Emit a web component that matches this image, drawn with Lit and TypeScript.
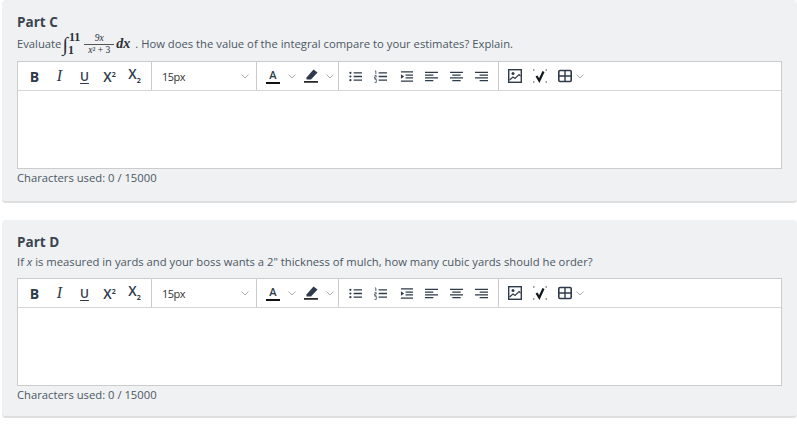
import { LitElement, html, css, svg } from "lit";
import { customElement } from "lit/decorators.js";

const ic = (w: number, body: unknown) => html`<svg width=${w} height="14" viewBox="0 0 ${w} 14" fill="none">${body}</svg>`;
const chev = html`<svg class="chev" width="8" height="5" viewBox="0 0 8 5" fill="none"><path d="M.5.5L4 4 7.500.5" stroke="#a9adb3" stroke-width="1"/></svg>`;
const D = "#2f3a4a";

const listLines = svg`<path d="M5 3h9M5 7h9M5 11h9" stroke=${D} stroke-width="1.4"/>`;
const icons = {
  bullets: ic(14, svg`${listLines}<circle cx="1.500" cy="3" r="1.200" fill=${D}/><circle cx="1.500" cy="7" r="1.200" fill=${D}/><circle cx="1.500" cy="11" r="1.200" fill=${D}/>`),
  numbers: ic(14, svg`${listLines}<path d="M1 1h1v3.500M.6 6h1.800v1.500H.6V9h1.900M.6 10h1.900v3.300H.6" stroke=${D} stroke-width=".8"/>`),
  indent: ic(14, svg`<path d="M1 2h13M6 5.500h8M6 8.500h8M1 12h13" stroke=${D} stroke-width="1.400"/><path d="M1 4.500l3.500 2.500L1 9.500z" fill=${D}/>`),
  left: ic(14, svg`<path d="M0 2.500h14M0 5.500h9M0 8.500h14M0 11.500h9" stroke=${D} stroke-width="1.400"/>`),
  center: ic(14, svg`<path d="M0 2.500h14M2.500 5.500h9M0 8.500h14M2.500 11.500h9" stroke=${D} stroke-width="1.400"/>`),
  right: ic(14, svg`<path d="M0 2.500h14M5 5.500h9M0 8.500h14M5 11.500h9" stroke=${D} stroke-width="1.400"/>`),
  image: ic(14, svg`<rect x=".7" y=".7" width="12.600" height="12.600" stroke=${D} stroke-width="1.400"/><circle cx="5" cy="4.500" r="1.500" fill=${D}/><path d="M1.500 11l3.500-3 2 1.500 4-4 1.500 1.500" stroke=${D} stroke-width="1.200"/>`),
  check: ic(16, svg`<path d="M4.500 7l2.800 4.500L11.500 2.500" stroke="#15191f" stroke-width="2.300"/><path d="M1 1h1.500M13.500 1H15M1 13h1.500M13.500 13H15" stroke="#444" stroke-width="1.200"/>`),
  table: ic(14, svg`<rect x=".8" y="1.500" width="12.400" height="11" rx="1.200" stroke=${D} stroke-width="1.600"/><path d="M1 7h12M7 2v10" stroke=${D} stroke-width="1.400"/>`),
  pen: ic(14, svg`<path d="M2.500 8.500L9.500 0.500l4 3L7 10.500H2.500z" fill=${D}/><path d="M0 12.900h14" stroke="#111" stroke-width="1.600"/>`),
};

@customElement("rich-editor")
export class RichEditor extends LitElement {
  static styles = css`
    :host { display: block; }
    .editor { border: 1px solid #ccc; background: #fff; }
    .bar { height: 28px; display: flex; align-items: stretch; border-bottom: 1px solid #d6d6d6; }
    .group { display: flex; align-items: center; border-right: 1px solid #ccc; box-sizing: border-box; }
    .fmt { width: 134px; padding-left: 4px; }
    .fmt span { width: 25px; display: block; text-align: center; color: #2f3a4a; }
    .b { font: 700 14px "Open Sans", sans-serif; }
    .i { font: italic 400 16px "Liberation Serif", serif; }
    .u { font: 600 12px "Open Sans", sans-serif; text-decoration: underline; text-underline-offset: 2px; }
    .x { font: 600 13.500px "Open Sans", sans-serif; position: relative; }
    .x sup, .x sub { font-size: 7px; line-height: 0; font-weight: 700; }
    .fmt .x { top: 1px; }
    .fmt .x.up { top: -2px; }
    .size { width: 105px; padding: 0 7px 0 10px; justify-content: space-between; font: 400 11px "Open Sans", sans-serif; color: #333; letter-spacing: -.5px; }
    .colors { width: 82px; padding-left: 9px; gap: 8px; }
    .a { width: 14px; font: 600 11px/12px "Open Sans", sans-serif; text-align: center; color: #2f3a4a; border-bottom: 2px solid #111; height: 13px; }
    .lists { width: 160px; padding-left: 10px; gap: 12.300px; }
    .lists svg { width: 13px; height: 13px; }
    .tools { display: flex; align-items: center; padding-left: 9px; gap: 10px; }
    .tools .tb { display: flex; align-items: center; gap: 4px; }
    .chev { display: block; }
    .body { height: 77px; }
    .count { margin-top: 2px; font: 400 11.250px/14px "Open Sans", sans-serif; color: #4b5763; }
    svg { display: block; }
  `;
  render() {
    return html`
      <div class="editor">
        <div class="bar">
          <div class="group fmt">
            <span class="b">B</span><span class="i">I</span><span class="u">U</span>
            <span class="x">X<sup>2</sup></span><span class="x up">X<sub>2</sub></span>
          </div>
          <div class="group size"><span>15px</span>${chev}</div>
          <div class="group colors">
            <span class="a">A</span>${chev}${icons.pen}${chev}
          </div>
          <div class="group lists">
            ${icons.bullets}${icons.numbers}${icons.indent}${icons.left}${icons.center}${icons.right}
          </div>
          <div class="tools">
            ${icons.image}${icons.check}
            <div class="tb">${icons.table}${chev}</div>
          </div>
        </div>
        <div class="body"></div>
      </div>
      <div class="count">Characters used: 0 / 15000</div>
    `;
  }
}

@customElement("app-root")
export class AppRoot extends LitElement {
  static styles = css`
    :host { display: block; width: 797px; height: 426px; background: #fff; overflow: hidden; }
    .page { padding: 0 0 0 2px; display: flex; flex-direction: column; gap: 17px; }
    .card { box-sizing: border-box; background: #f0f1f3; border-radius: 4px; border-bottom: 2px solid #dcdee0; padding: 13px 15px 0; height: 203px; }
    .card.d { height: 198px; }
    h3 { margin: 0; font: 700 13.500px/18px "Open Sans", sans-serif; color: #3a4450; }
    .q { box-sizing: border-box; height: 30px; padding-bottom: 4px; display: flex; align-items: center; font: 400 11.250px/14px "Open Sans", sans-serif; color: #4b5763; white-space: pre; }
    .d .q { height: 27px; padding-bottom: 5px; }
    .math { display: inline-flex; align-items: center; font-family: "Liberation Serif", serif; color: #2b2f36; font-weight: 700; }
    .int { font-size: 20px; line-height: 22px; font-style: italic; font-weight: 400; margin-left: 1px; }
    .lim { display: flex; flex-direction: column; gap: 2px; font-size: 12px; line-height: 11px; margin-right: 4px; }
    .lim .u { margin-left: 1px; }
    .frac { display: flex; flex-direction: column; align-items: center; font-size: 9.500px; line-height: 10.500px; width: 30px; font-weight: 400; }
    .top { width: 100%; text-align: center; border-bottom: 1px solid #555; }
    .dx { font-size: 14px; font-style: italic; margin: 0 5px 0 2px; }
    i.v { font-family: "Open Sans", sans-serif; }
  `;
  render() {
    return html`
      <div class="page">
        <section class="card">
          <h3>Part C</h3>
          <div class="q">Evaluate<span class="math"><span class="int">∫</span><span class="lim"><span class="u">11</span><span class="l">1</span></span><span class="frac"><span class="top"><i>9x</i></span><span><i>x</i>² + 3</span></span><span class="dx">dx</span></span>. How does the value of the integral compare to your estimates? Explain.</div>
          <rich-editor></rich-editor>
        </section>
        <section class="card d">
          <h3>Part D</h3>
          <div class="q">If <i class="v">x</i> is measured in yards and your boss wants a 2" thickness of mulch, how many cubic yards should he order?</div>
          <rich-editor></rich-editor>
        </section>
      </div>
    `;
  }
}
